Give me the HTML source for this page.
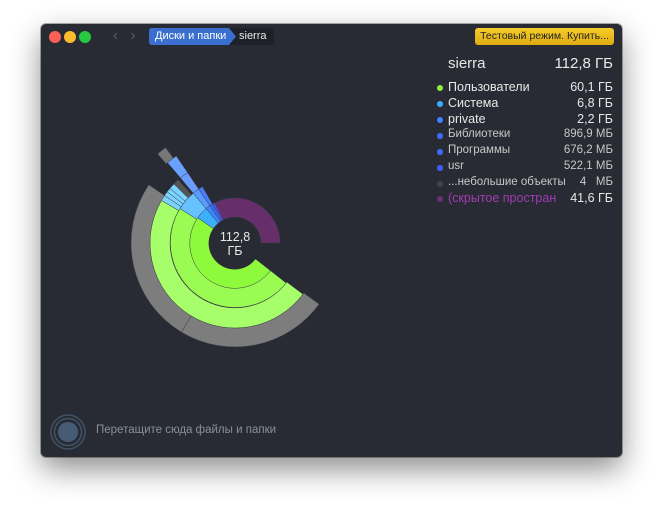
<!DOCTYPE html><html><head><meta charset="utf-8"><style>
body{margin:0;width:663px;height:516px;background:#fff;position:relative;overflow:hidden;font-family:"Liberation Sans","Noto Sans CJK SC",sans-serif}
.win{position:absolute;left:41px;top:24px;width:581px;height:433px;background:#282b33;border-radius:5px;box-shadow:0 12px 30px rgba(0,0,0,.45),0 0 0 1px rgba(0,0,0,.3)}
.d{position:absolute;top:7px;width:12px;height:12px;border-radius:50%}
.t{position:absolute;color:#e8e8e8;white-space:nowrap}
.r{position:absolute;left:407px;width:165px;height:16px;font-size:12.5px}
.r .n{position:absolute;left:0}.r .v{position:absolute;right:0}
.r i{position:absolute;left:-11px;top:5px;width:6px;height:6px;border-radius:50%}
</style></head><body>
<div class="win">
<div class="d" style="left:8px;background:#fc5f57"></div>
<div class="d" style="left:23px;background:#fdbc2e"></div>
<div class="d" style="left:38px;background:#28c840"></div>
<div class="t" style="left:72px;top:3px;color:#5a5e66;font-size:15px">‹&nbsp;&nbsp;&nbsp;›</div>
<svg style="position:absolute;left:108px;top:4px" width="125" height="17"><path d="M3 0H80L87 8.5L80 17H3Q0 17 0 14V3Q0 0 3 0Z" fill="#3b6fcf"/><path d="M80 0H122Q125 0 125 3V14Q125 17 122 17H80L87 8.5Z" fill="#1e2127"/></svg>
<div class="t" style="left:114px;top:6px;font-size:11px;color:#fff">Диски и папки</div>
<div class="t" style="left:198px;top:6px;font-size:11px">sierra</div>
<div style="position:absolute;left:434px;top:4px;width:139px;height:17px;background:linear-gradient(#f5cc2a,#deac12);border-radius:3px;font-size:10.5px;color:#222;text-align:center;line-height:17px;white-space:nowrap">Тестовый режим. Купить...</div>
<div class="t" style="left:407px;top:31px;font-size:15px">sierra</div>
<div class="t" style="right:9px;top:31px;font-size:15px">112,8 ГБ</div>
<div class="r t" style="top:56px"><i style="background:#8ef03c"></i><span class="n">Пользователи</span><span class="v">60,1 ГБ</span></div>
<div class="r t" style="top:72px"><i style="background:#3cb0ff"></i><span class="n">Система</span><span class="v">6,8 ГБ</span></div>
<div class="r t" style="top:88px"><i style="background:#3c86ff"></i><span class="n">private</span><span class="v">2,2 ГБ</span></div>
<div class="r t" style="top:104px;font-size:11.5px;color:#c8c8c8"><i style="background:#3c6cff"></i><span class="n">Библиотеки</span><span class="v">896,9 МБ</span></div>
<div class="r t" style="top:120px;font-size:11.5px;color:#c8c8c8"><i style="background:#3c6cff"></i><span class="n">Программы</span><span class="v">676,2 МБ</span></div>
<div class="r t" style="top:136px;font-size:11.5px;color:#c8c8c8"><i style="background:#3c5cff"></i><span class="n">usr</span><span class="v">522,1 МБ</span></div>
<div class="r t" style="top:152px;font-size:11.5px;color:#c8c8c8"><i style="background:#444"></i><span class="n">...небольшие объекты</span><span class="v">4&nbsp;&nbsp;&nbsp;МБ</span></div>
<div class="r t" style="top:167px"><i style="background:#6a2f72"></i><span class="n" style="color:#a23cb4">(скрытое простран</span><span class="v">41,6 ГБ</span></div>
<svg id="s" style="position:absolute;left:0;top:0" width="581" height="433"></svg>
<div class="t" style="left:170px;top:206px;font-size:12.5px;text-align:center;width:48px;line-height:14px">112,8<br>ГБ</div>
<svg style="position:absolute;left:8px;top:389px" width="38" height="38"><circle cx="19" cy="19" r="17" fill="none" stroke="#3f5366" stroke-width="1.5"/><circle cx="19" cy="19" r="13.5" fill="none" stroke="#3f5366" stroke-width="1.5"/><circle cx="19" cy="19" r="10" fill="#465c74"/></svg>
<div class="t" style="left:55px;top:400px;font-size:11.5px;color:#8a9099">Перетащите сюда файлы и папки</div>
</div>
<script>
var cx=194,cy=219,s=document.getElementById('s'),h='';
function a(r1,r2,a1,a2,c){function p(r,a){a=a*Math.PI/180;return (cx+r*Math.sin(a)).toFixed(1)+' '+(cy-r*Math.cos(a)).toFixed(1)}
var l=(a2-a1)>180?1:0;h+='<path d="M'+p(r1,a1)+'L'+p(r2,a1)+'A'+r2+' '+r2+' 0 '+l+' 1 '+p(r2,a2)+'L'+p(r1,a2)+'A'+r1+' '+r1+' 0 '+l+' 0 '+p(r1,a1)+'Z" fill="'+c+'" stroke="#3a3d44" stroke-width=".5"/>';}
a(26,45,-30,90,'#662f6c');
a(26,45,128,304,'#8efa3c');a(45,65,128,302,'#9afc52');a(65,85,127,300,'#a6fe6a');
a(85,104,126,211,'#7d7d7d');a(85,104,211,304,'#7d7d7d');
a(26,45,304,320,'#3cb0ff');a(26,45,320,326,'#3c86ff');a(26,45,326,330,'#3c6cff');a(26,45,330,333,'#3c5cff');
a(45,65,302,320,'#66c2ff');a(45,65,320,326,'#5a9cff');a(45,65,326,330,'#4a7cff');
a(65,85,300,304,'#7ad4ff');a(65,85,304,307,'#7ad4ff');a(65,85,307,310,'#7ad4ff');a(65,85,310,314,'#7ad4ff');a(65,85,314,318,'#555');
a(65,85,320,326,'#6a9cff');a(85,105,320,326,'#6aa0ff');a(105,118,319,324,'#777');
s.innerHTML=h;
</script>
</body></html>
